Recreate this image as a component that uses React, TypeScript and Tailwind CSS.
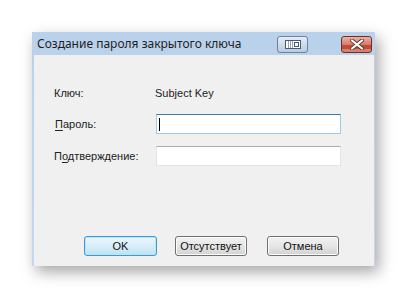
const font = { fontFamily: '"Liberation Sans", Arial, sans-serif' };

const WinButton = ({ label, primary }: { label: string; primary?: boolean }) => (
    <div
        className={`h-[20px] flex items-center justify-center rounded-[3px] border text-[11px] text-[#111] ${
            primary
                ? "border-[#3c9ad1] bg-gradient-to-b from-[#eaf6fd] via-[#d9eefa] to-[#bfe0f2] shadow-[inset_0_0_0_1px_#b7e5fb]"
                : "border-[#707070] bg-gradient-to-b from-[#f2f2f2] via-[#e6e6e6] to-[#d2d2d2] shadow-[inset_0_0_0_1px_#fcfcfc]"
        }`}
    >
        {label}
    </div>
);

const App: React.FC = () => {
    return (
        <div className="w-[406px] h-[299px] bg-white overflow-hidden pt-[32px] pl-[32px]" style={font}>
            <div className="w-[343px] h-[234px] flex flex-col shadow-[4px_6px_14px_rgba(0,0,0,0.35)] bg-gradient-to-b from-[#b9d1ea] to-[#c4d8ee]">
                {/* title bar */}
                <div className="h-[23px] flex items-center pl-[5px] pr-[3px]">
                    <span
                        className="text-[12px] text-[#1e1e1e] flex-1 leading-none pt-[1px]"
                        style={{ fontFamily: '"Noto Sans", "Open Sans", sans-serif' }}
                    >
                        Создание пароля закрытого ключа
                    </span>
                    <div className="w-[31px] h-[17px] mt-[2px] rounded-[3px] border border-[#6d819c] bg-gradient-to-b from-[#e4edf8] via-[#cfdcec] to-[#b9cbe2] flex items-center justify-center">
                        <svg width="16" height="9" viewBox="0 0 16 9">
                            <rect x="0.5" y="0.5" width="15" height="8" fill="#ffffff" stroke="#4a5a70" />
                            <line x1="3.5" y1="1" x2="3.5" y2="8" stroke="#9aa6b6" />
                            <line x1="5.5" y1="1" x2="5.5" y2="8" stroke="#9aa6b6" />
                            <line x1="7.5" y1="1" x2="7.5" y2="8" stroke="#9aa6b6" />
                            <rect x="9.5" y="2.5" width="4" height="4" fill="#ffffff" stroke="#4a5a70" />
                        </svg>
                    </div>
                    <div className="w-[31px] h-[17px] mt-[2px] ml-[33px] rounded-[3px] border border-[#6b2f28] bg-gradient-to-b from-[#eab0a3] via-[#d97b6a] to-[#d6846f] flex items-center justify-center relative overflow-hidden">
                        <div className="absolute left-0 right-0 top-[8px] h-[4px] bg-[#c24a36]" />
                        <svg width="14" height="11" viewBox="0 0 14 11" className="relative">
                            <path d="M2 1.5 L12 9.5 M12 1.5 L2 9.5" stroke="#5b3a36" strokeWidth="4" strokeLinecap="round" />
                            <path d="M2 1.5 L12 9.5 M12 1.5 L2 9.5" stroke="#ffffff" strokeWidth="2.2" strokeLinecap="round" />
                        </svg>
                    </div>
                </div>

                {/* client area */}
                <div className="flex-1 ml-[2px] mr-[1px] bg-[#f0f0f0] flex flex-col pt-[28px] pb-[10px] text-[11px] text-[#222]">
                    <div className="h-[20px] flex items-center pl-[20px]">
                        <span className="w-[101px]">Ключ:</span>
                        <span>Subject Key</span>
                    </div>
                    <div className="h-[20px] mt-[11px] flex items-center pl-[21px]">
                        <span className="w-[101px]">
                            <span className="underline underline-offset-2">П</span>ароль:
                        </span>
                        <div className="w-[185px] h-[20px] bg-white border border-[#a4c9e3] border-t-[#3d7bad] flex items-center pl-[2px]">
                            <div className="w-px h-[13px] bg-black" />
                        </div>
                    </div>
                    <div className="h-[20px] mt-[12px] flex items-center pl-[20px]">
                        <span className="w-[102px]">
                            П<span className="underline underline-offset-2">о</span>дтверждение:
                        </span>
                        <div className="w-[185px] h-[20px] bg-white border border-[#e2e3ea] border-t-[#abadb3]" />
                    </div>

                    <div className="mt-auto flex pl-[50px]">
                        <div className="w-[73px]">
                            <WinButton label="OK" primary />
                        </div>
                        <div className="w-[72px] ml-[18px]">
                            <WinButton label="Отсутствует" />
                        </div>
                        <div className="w-[72px] ml-[20px]">
                            <WinButton label="Отмена" />
                        </div>
                    </div>
                </div>
            </div>
        </div>
    );
};

export default App;
